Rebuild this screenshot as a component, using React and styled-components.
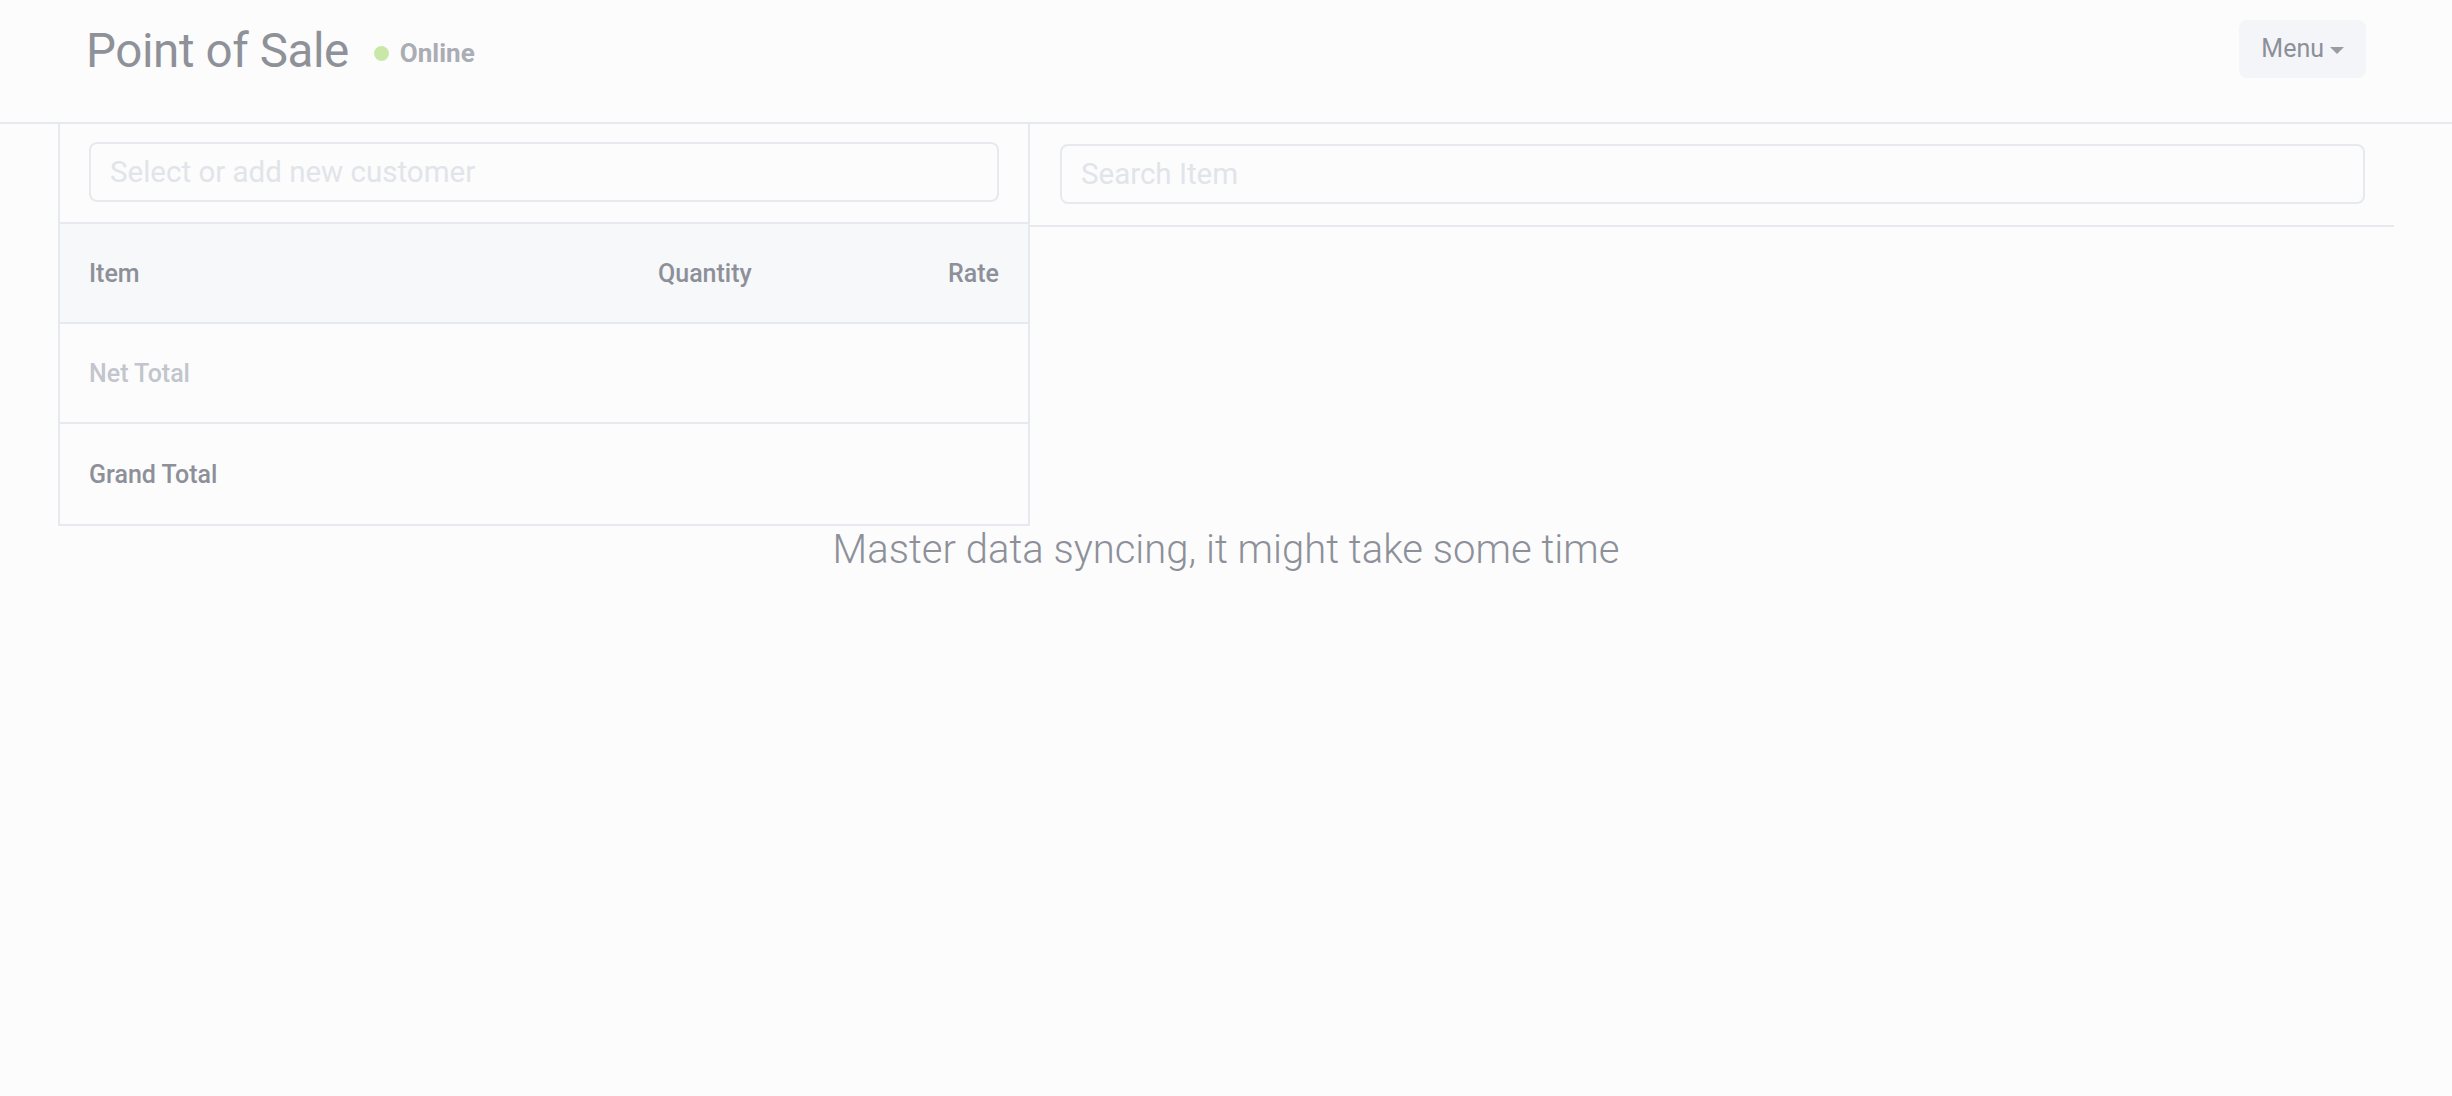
import React from 'react'
import styled, { createGlobalStyle } from 'styled-components'

const GlobalStyle = createGlobalStyle`
  * { box-sizing: border-box; }
  body {
    margin: 0;
    background: #fcfcfd;
    font-family: Roboto, "Liberation Sans", sans-serif;
  }
`;

function App() {
  return (
    <>
      <GlobalStyle />
      <Header>
        <Brand>
          <Title>Point of Sale</Title>
          <Status>
            <Dot />
            Online
          </Status>
        </Brand>
        <MenuButton>
          Menu
          <Caret />
        </MenuButton>
      </Header>
      <Main>
        <LeftPanel>
          <Section>
            <Input placeholder="Select or add new customer" />
          </Section>
          <Row head>
            <Cell>Item</Cell>
            <Cell>Quantity</Cell>
            <Cell right>Rate</Cell>
          </Row>
          <Row>
            <Cell muted>Net Total</Cell>
          </Row>
          <Row last>
            <Cell>Grand Total</Cell>
          </Row>
        </LeftPanel>
        <RightPanel>
          <Section wide>
            <Input placeholder="Search Item" />
          </Section>
        </RightPanel>
      </Main>
      <Message>Master data syncing, it might take some time</Message>
    </>
  )
}

export default App

const Header = styled.header`
  height: 124px;
  display: flex;
  align-items: center;
  justify-content: space-between;
  padding: 0 86px 20px 86px;
  border-bottom: 2px solid #e6e9ee;
`;

const Brand = styled.div`
  display: flex;
  align-items: center;
  gap: 25px;
`;

const Title = styled.h1`
  margin: 0;
  font-size: 47.5px;
  font-weight: 400;
  color: #8f9199;
  letter-spacing: -0.4px;
`;

const Status = styled.span`
  display: flex;
  align-items: center;
  gap: 11px;
  font-size: 26px;
  font-weight: 700;
  color: #aaadb4;
  margin-top: 4px;
`;

const Dot = styled.span`
  width: 15px;
  height: 15px;
  border-radius: 50%;
  background: #c9e8a8;
`;

const MenuButton = styled.button`
  height: 58px;
  padding: 0 22px;
  display: flex;
  align-items: center;
  gap: 6px;
  border: none;
  border-radius: 8px;
  background: #f4f5f8;
  color: #8d9099;
  font-family: inherit;
  font-size: 25px;
  margin-top: -5px;
`;

const Caret = styled.span`
  width: 0;
  height: 0;
  border-left: 7px solid transparent;
  border-right: 7px solid transparent;
  border-top: 7px solid #9a9ca3;
  margin-top: 3px;
`;

const Main = styled.main`
  width: 2336px;
  margin: 0 auto;
  display: flex;
  align-items: flex-start;
`;

const LeftPanel = styled.div`
  width: 972px;
  border: 2px solid #e6e9ee;
  border-top: none;
`;

const RightPanel = styled.div`
  flex: 1;
`;

const Section = styled.div`
  padding: ${p => (p.wide ? '20px 29px 21px 30px' : '18px 29px 20px 29px')};
  border-bottom: 2px solid #e6e9ee;
`;

const Input = styled.input`
  display: block;
  width: 100%;
  height: 60px;
  padding: 0 19px;
  border: 2px solid #e6e9ee;
  border-radius: 8px;
  background: #fcfcfd;
  font-family: inherit;
  font-size: 29.5px;
  outline: none;
  &::placeholder {
    color: #e1e4e9;
  }
`;

const Row = styled.div`
  height: 100px;
  display: grid;
  grid-template-columns: 1fr 98px 243px;
  align-items: center;
  padding: 0 29px;
  background: ${p => (p.head ? '#f7f8fa' : 'transparent')};
  border-bottom: ${p => (p.last ? 'none' : '2px solid #e6e9ee')};
`;

const Cell = styled.span`
  font-size: 25px;
  font-weight: 500;
  color: ${p => (p.muted ? '#c2c5cc' : '#8d9099')};
  text-align: ${p => (p.right ? 'right' : 'left')};
`;

const Message = styled.p`
  margin: 0;
  text-align: center;
  font-size: 40px;
  font-weight: 300;
  color: #8d9099;
`;
